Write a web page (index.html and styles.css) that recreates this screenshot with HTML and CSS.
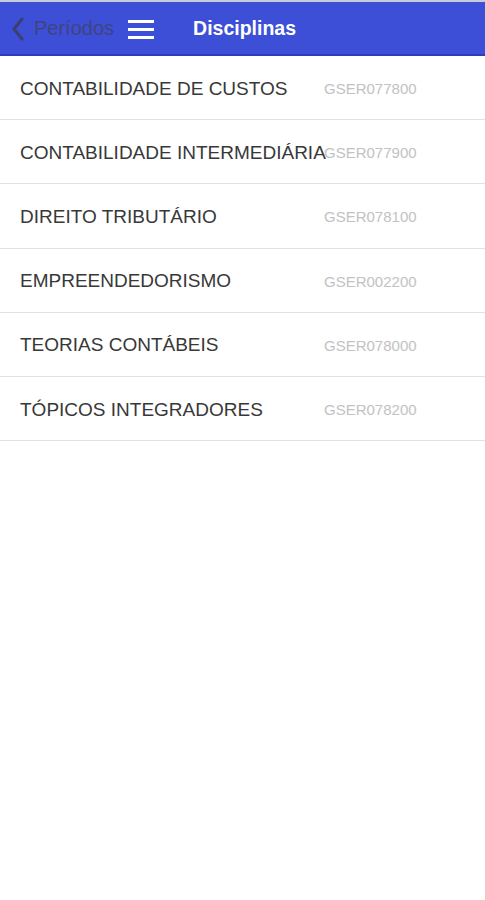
FILE: index.html
```html
<!DOCTYPE html>
<html lang="pt">

<head>
    <meta charset="UTF-8">
    <meta name="viewport" content="width=device-width, initial-scale=1.0">
    <title>Disciplinas</title>
    <link rel="stylesheet" href="styles.css">
</head>

<body>
    <header class="bar">
        <a class="back" href="#">
            <svg class="back-icon" width="14" height="24" viewBox="0 0 14 24">
                <path d="M11 2 L3 12 L11 22" fill="none" stroke="#3b3f6e" stroke-width="3" stroke-linecap="round" stroke-linejoin="round" />
            </svg>
            <span>Períodos</span>
        </a>
        <svg class="menu-icon" width="26" height="20" viewBox="0 0 26 20">
            <rect x="0" y="1" width="26" height="3" fill="#fff" />
            <rect x="0" y="9" width="26" height="3" fill="#fff" />
            <rect x="0" y="17" width="26" height="3" fill="#fff" />
        </svg>
        <h1 class="title">Disciplinas</h1>
    </header>

    <ul class="list">
        <li class="item">
            <span class="name">CONTABILIDADE DE CUSTOS</span>
            <span class="code">GSER077800</span>
        </li>
        <li class="item">
            <span class="name">CONTABILIDADE INTERMEDIÁRIA</span>
            <span class="code">GSER077900</span>
        </li>
        <li class="item">
            <span class="name">DIREITO TRIBUTÁRIO</span>
            <span class="code">GSER078100</span>
        </li>
        <li class="item">
            <span class="name">EMPREENDEDORISMO</span>
            <span class="code">GSER002200</span>
        </li>
        <li class="item">
            <span class="name">TEORIAS CONTÁBEIS</span>
            <span class="code">GSER078000</span>
        </li>
        <li class="item">
            <span class="name">TÓPICOS INTEGRADORES</span>
            <span class="code">GSER078200</span>
        </li>
    </ul>
</body>

</html>
```

FILE: styles.css
```css
body {
    margin: 0;
    font-family: "Liberation Sans", Arial, sans-serif;
    background-color: #fff;
}

a {
    text-decoration: none;
}

.bar {
    display: flex;
    align-items: center;
    height: 51px;
    padding: 1px 0 0 11px;
    background-color: #3d4fd6;
    border-top: 2px solid #c9cbd8;
    border-bottom: 2px solid #2b3cc4;
}

.back {
    display: flex;
    align-items: center;
    gap: 9px;
    color: #3f447e;
    font-size: 20px;
}

.menu-icon {
    margin-left: 14px;
}

.title {
    margin: 0 0 0 39px;
    color: #fff;
    font-size: 19.5px;
    font-weight: bold;
}

.list {
    margin: 0;
    padding: 0;
    list-style: none;
}

/* rows in the shot are a fraction over 64px apart */
.item {
    display: flex;
    align-items: center;
    height: 61.2px;
    padding: 2px 0 0 20px;
    border-bottom: 1px solid #e2e2e2;
}

.name {
    width: 304px;
    color: #383838;
    font-size: 19px;
    white-space: nowrap;
}

.code {
    color: #c2c2c2;
    font-size: 15px;
}
```
